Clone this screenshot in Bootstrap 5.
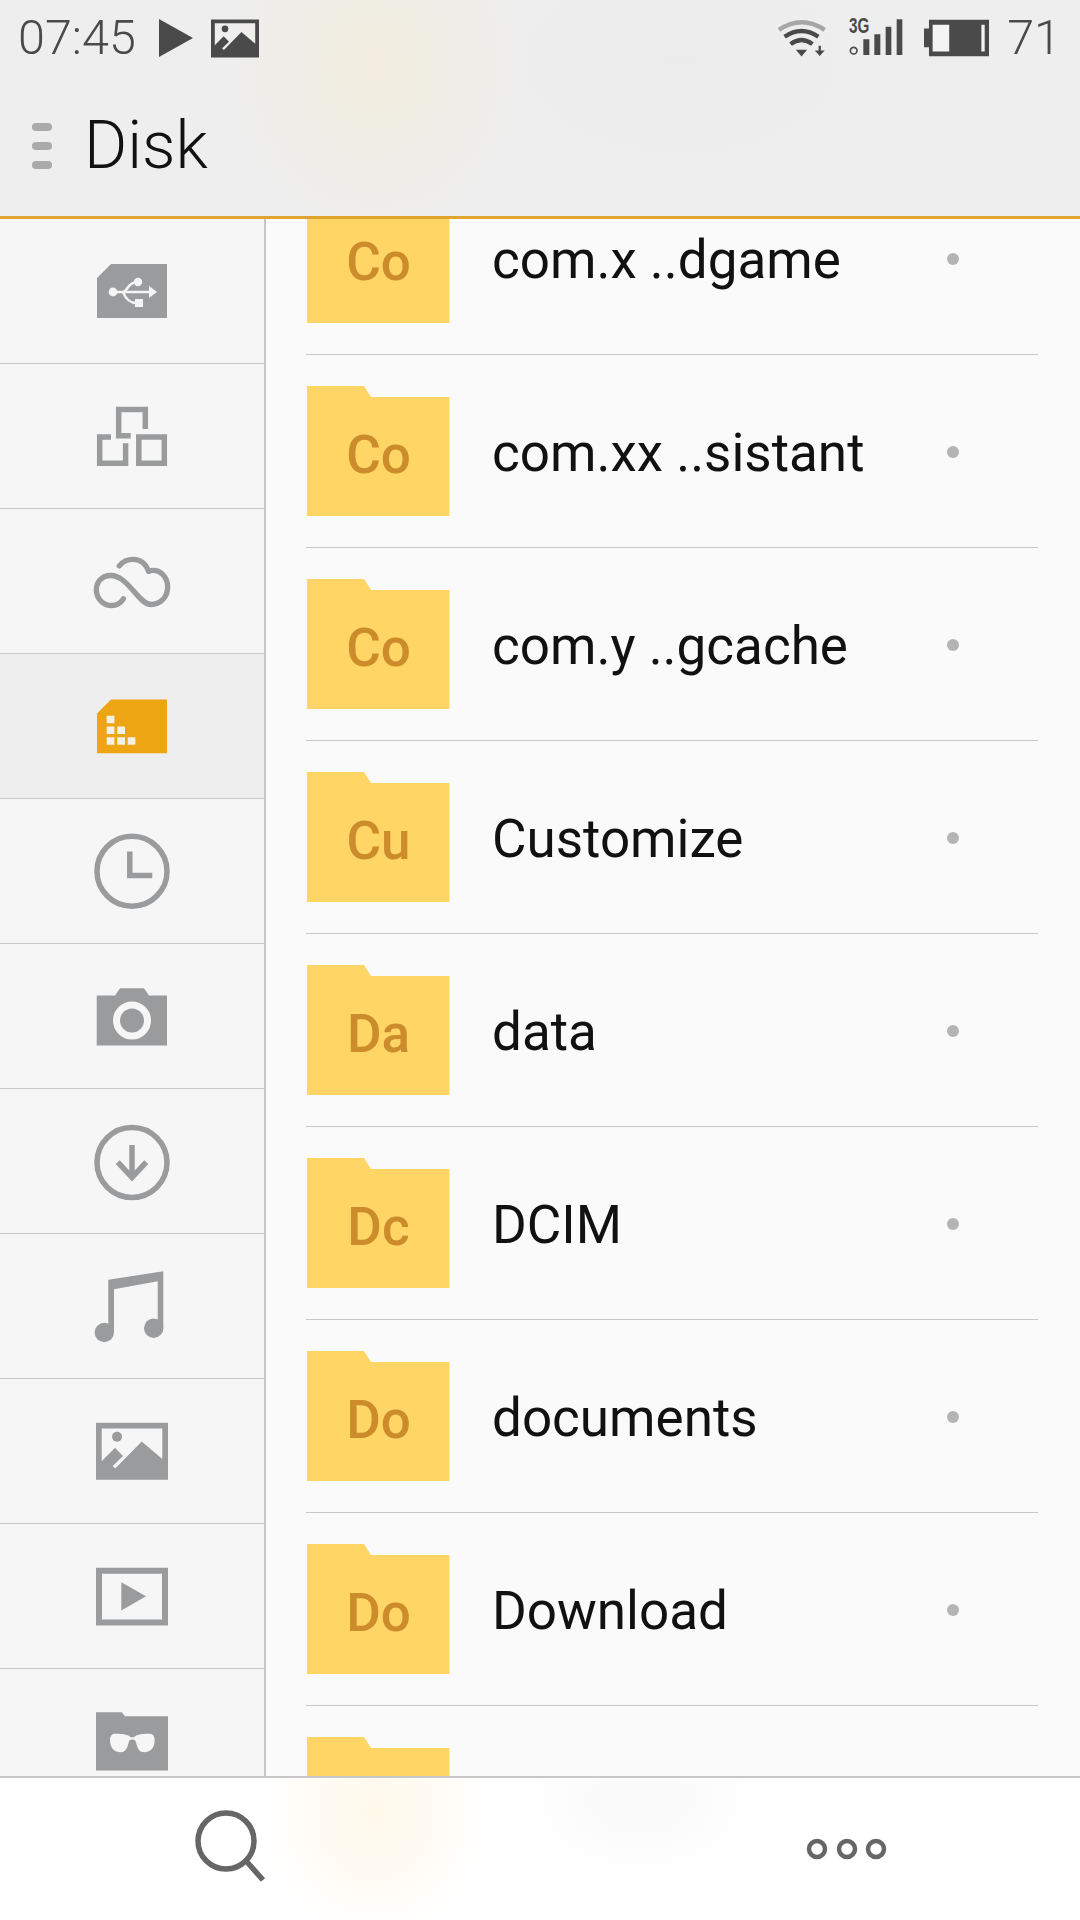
<!DOCTYPE html>
<html lang="en">
<head>
  <meta charset="UTF-8">
  <meta name="viewport" content="width=device-width, initial-scale=1">
  <title>Disk</title>
  <link href="https://cdn.jsdelivr.net/npm/bootstrap@5.3.0/dist/css/bootstrap.min.css" rel="stylesheet">
  <style>
    html, body { height: 1920px; overflow: hidden; }
    body { font-family: Roboto, "Liberation Sans", sans-serif; background: #fafafa; color: #111; }
    .app-shell { width: 1080px; height: 1920px; }
    .app-head {
      height: 219px; flex: none; border-bottom: 3px solid #e0a52e;
      background:
        radial-gradient(ellipse 150px 170px at 375px 65px, rgba(245,236,205,.5), rgba(245,236,205,0)),
        radial-gradient(ellipse 170px 100px at 680px 60px, rgba(232,232,232,.35), rgba(232,232,232,0)),
        #eeeeee;
    }
    .status-row { height: 76px; padding: 0 19px 0 18px; color: #4a4a4a; font-weight: 300; font-size: 48.5px; line-height: 76px; }
    .status-row svg { flex: none; display: block; }
    .ico-play { margin-left: 23px; }
    .ico-shot { margin-left: 18px; }
    .ico-signal { margin-left: 21px; margin-bottom: 9px; }
    .ico-battery { margin-left: 21px; }
    .batt-pct { margin-left: 18px; }
    .title-row { height: 140px; padding-left: 32px; }
    .menu-bars { width: 20px; gap: 11px; margin-right: 32px; }
    .menu-bars span { display: block; height: 8px; border-radius: 4px; background: #aaa; }
    .app-title { font-size: 66px; font-weight: 300; line-height: 1; color: #111; margin: 0; }
    .app-body { min-height: 0; }
    .side-col { width: 266px; flex: none; background: #f6f6f6; border-right: 2px solid #c6c6c6; overflow: hidden; }
    .side-item { height: 145px; flex: none; border-bottom: 1px solid #c8c8c8; color: #9a9b9c; }
    .side-item.is-on { background: #eeeeee; color: #eea514; }
    .file-col { padding: 0 42px 0 40px; overflow: hidden; background: #fafafa; }
    .file-rows { margin-top: -57px; }
    .file-row { height: 193px; flex: none; border-bottom: 1px solid #c8c8c8; position: relative; }
    .folder-box { width: 143px; height: 130px; margin: 0 42px 0 1px; position: relative; flex: none; }
    .folder-box svg { position: absolute; left: 0; top: 0; }
    .folder-tag { position: absolute; left: 0; right: 0; top: 15px; text-align: center; font-size: 53px; line-height: 108px; font-weight: 500; color: #cc8c2c; }
    .file-name { font-size: 53px; font-weight: 400; color: #111; line-height: 1; padding-top: 5px; white-space: nowrap; }
    .file-dot { position: absolute; left: 641px; top: 91px; width: 12px; height: 12px; border-radius: 50%; background: #b4b4b4; }
    .app-foot {
      height: 144px; flex: none; border-top: 2px solid #c8c8c8; padding: 0 191px 0 195px;
      background:
        radial-gradient(ellipse 115px 130px at 375px 35px, rgba(255,245,222,.65), rgba(255,245,222,0)),
        radial-gradient(ellipse 130px 90px at 640px 20px, rgba(243,243,243,.45), rgba(243,243,243,0)),
        #ffffff;
    }
  </style>
</head>
<body>
  <svg width="0" height="0" class="position-absolute">
    <symbol id="icoPicture" viewBox="0 0 80 80">
      <path fill="currentColor" fill-rule="evenodd" d="M4 11.8H76V68.8H4ZM9.7 17.5V50.2L23 36.8 31 45 20.7 55 23.3 57.5 49.7 30.5 70.3 48V17.5Z"/>
      <circle cx="25" cy="25.8" r="5" fill="currentColor"/>
    </symbol>
  </svg>

  <div class="app-shell d-flex flex-column">
    <!-- cabecera -->
    <header class="app-head d-flex flex-column">
      <div class="status-row d-flex align-items-center">
        <span>07:45</span>
        <svg class="ico-play" width="34" height="38" viewBox="0 0 34 38"><path fill="#4a4a4a" d="M0 0 34 19 0 38Z"/></svg>
        <svg class="ico-shot" width="48" height="39" viewBox="4 11 72 58.5"><use href="#icoPicture" width="80" height="80" color="#4a4a4a"/></svg>
        <div class="ms-auto d-flex align-items-center">
          <svg width="53" height="42" viewBox="225 50 160 125">
            <g fill="none" stroke-width="13">
              <path stroke="#a6a6a6" d="M237 88Q305 42 375 88"/>
              <path stroke="#4a4a4a" d="M254 109Q305 74 356 109"/>
              <path stroke="#4a4a4a" d="M272 131Q305 106 338 131"/>
            </g>
            <path fill="#4a4a4a" d="M288 148H322L305 168Z"/>
            <path stroke="#4a4a4a" stroke-width="7" d="M360 136V154"/>
            <path fill="#4a4a4a" d="M345 150H375L360 167Z"/>
          </svg>
          <svg class="ico-signal" width="54" height="47" viewBox="447 30 162 141">
            <text x="447" y="98" font-family="Liberation Sans, sans-serif" font-weight="700" font-size="68" fill="#4a4a4a" textLength="61" lengthAdjust="spacingAndGlyphs">3G</text>
            <circle cx="461" cy="152" r="10" fill="none" stroke="#4a4a4a" stroke-width="5"/>
            <path fill="#4a4a4a" d="M490 118H508V165H490ZM523 103H541V165H523ZM557 80H574V165H557ZM590 58H607V165H590Z"/>
          </svg>
          <svg class="ico-battery" width="65" height="38" viewBox="670 55 196 114">
            <path fill="#4a4a4a" d="M670 83H685V57H866V167H685V140H670Z"/>
            <path fill="#f4f4f4" d="M696 72H746V153H696ZM843 72H853V153H843Z"/>
          </svg>
          <span class="batt-pct">71</span>
        </div>
      </div>
      <div class="title-row d-flex align-items-center">
        <div class="menu-bars d-flex flex-column"><span></span><span></span><span></span></div>
        <h1 class="app-title">Disk</h1>
      </div>
    </header>

    <div class="app-body d-flex flex-grow-1">
      <!-- barra lateral -->
      <nav class="side-col d-flex flex-column">
        <div class="side-item d-flex align-items-center justify-content-center">
          <svg width="80" height="80" viewBox="0 0 80 80">
            <path fill="currentColor" d="M5 27 19 13H75V67H5Z"/>
            <g fill="#f4f4f4"><circle cx="21" cy="41" r="4.4"/><circle cx="46" cy="31" r="4.2"/><path d="M43 48H51V56H43ZM57 34.7 65 41 57 47Z"/></g>
            <g fill="none" stroke="#f4f4f4" stroke-width="2.6"><path d="M21 41H59"/><path d="M45 31C36 31 35 41 31 41"/><path d="M31 41C33 46 36 52 45 52"/></g>
          </svg>
        </div>
        <div class="side-item d-flex align-items-center justify-content-center">
          <svg width="80" height="80" viewBox="0 0 80 80"><g fill="none" stroke="currentColor" stroke-width="5.5">
            <path d="M53.3 33V13.5H26.7V39.7H38.7"/>
            <path d="M19 41H7.7V67.3H33.6V47.3"/>
            <path d="M46.8 41H72.3V67.3H46.8Z"/>
          </g></svg>
        </div>
        <div class="side-item d-flex align-items-center justify-content-center">
          <svg width="80" height="80" viewBox="0 0 80 80"><g transform="translate(-22 -10.5) scale(.3333)" fill="none" stroke="currentColor" stroke-width="16" stroke-linecap="round">
            <path d="M148 106C165 85 215 70 236 122"/>
            <path d="M236 122C270 112 293 140 293 170 293 200 270 222 243 222 205 222 175 135 122 135 95 135 79 155 79 178 79 205 100 225 125 225 140 225 152 218 160 205"/>
          </g></svg>
        </div>
        <div class="side-item is-on d-flex align-items-center justify-content-center">
          <svg width="80" height="80" viewBox="0 0 80 80">
            <path fill="currentColor" d="M5 27.5 19 13.5H75V67.2H5Z"/>
            <path fill="#f4f0e4" d="M14.7 29.8h7.7v7.5h-7.7ZM14.7 40.5h7.7v7.5h-7.7ZM25.3 40.5h7.7v7.5h-7.7ZM14.7 51.2h7.7v7.5h-7.7ZM25.3 51.2h7.7v7.5h-7.7ZM35.7 51.2h7.7v7.5h-7.7Z"/>
          </svg>
        </div>
        <div class="side-item d-flex align-items-center justify-content-center">
          <svg width="80" height="80" viewBox="0 0 80 80"><g fill="none" stroke="currentColor" stroke-width="5.5">
            <circle cx="40" cy="40.2" r="35"/>
            <path d="M37.8 20.5V44.5H60.3"/>
          </g></svg>
        </div>
        <div class="side-item d-flex align-items-center justify-content-center">
          <svg width="80" height="80" viewBox="0 0 80 80">
            <path fill="currentColor" d="M4.7 19.5H23L28 12.2H52L57 19.5H75V69.5H4.7Z"/>
            <circle cx="40" cy="44.5" r="15.5" fill="none" stroke="#f6f6f6" stroke-width="7"/>
          </svg>
        </div>
        <div class="side-item d-flex align-items-center justify-content-center">
          <svg width="80" height="80" viewBox="0 0 80 80"><g fill="none" stroke="currentColor" stroke-width="5.5">
            <circle cx="40" cy="41.5" r="35"/>
            <path d="M40 24V56"/>
            <path d="M25.7 41.2 40 56.5 54.3 41.2"/>
          </g></svg>
        </div>
        <div class="side-item d-flex align-items-center justify-content-center">
          <svg width="80" height="80" viewBox="0 0 80 80">
            <path fill="currentColor" d="M16.3 13.8 71.3 5.2V62H65.7V15.2L22 23.2V66H16.3Z"/>
            <circle cx="12.3" cy="66.5" r="9.7" fill="currentColor"/>
            <circle cx="61.7" cy="62.2" r="9.7" fill="currentColor"/>
          </svg>
        </div>
        <div class="side-item d-flex align-items-center justify-content-center">
          <svg width="80" height="80" viewBox="0 0 80 80"><use href="#icoPicture"/></svg>
        </div>
        <div class="side-item d-flex align-items-center justify-content-center">
          <svg width="80" height="80" viewBox="0 0 80 80">
            <path fill="currentColor" fill-rule="evenodd" d="M4 11.8H76V69.5H4ZM10 17.8V63.5H70V17.8Z"/>
            <path fill="currentColor" d="M29.3 26.2 54 40.2 29.3 54.5Z"/>
          </svg>
        </div>
        <div class="side-item d-flex align-items-center justify-content-center">
          <svg width="80" height="80" viewBox="0 0 80 80">
            <path fill="currentColor" d="M4 11.2H29.7L33 15.2H76V69.5H4Z"/>
            <path transform="translate(-22 -150.5) scale(.3333)" fill="#f6f6f6" d="M135 550C125 550 120 558 120 568 120 590 130 605 150 605 170 605 172 590 177 572 180 565 194 565 197 572 202 590 204 605 224 605 244 605 254 590 254 568 254 558 249 550 239 550 225 550 205 550 195 558 190 562 184 562 179 558 169 550 149 550 135 550Z"/>
          </svg>
        </div>
      </nav>

      <!-- lista de carpetas -->
      <main class="file-col flex-grow-1">
        <div class="file-rows d-flex flex-column" id="fileRows"></div>
      </main>
    </div>

    <footer class="app-foot d-flex align-items-center justify-content-between">
      <svg width="72" height="78" viewBox="0 0 72 78"><g fill="none" stroke="#666" stroke-width="5.5">
        <circle cx="31" cy="31" r="28"/>
        <path d="M52 52 68 70"/>
      </g></svg>
      <svg width="84" height="24" viewBox="0 0 84 24"><g fill="none" stroke="#666" stroke-width="4.5">
        <circle cx="12" cy="12" r="8"/><circle cx="42" cy="12" r="8"/><circle cx="71" cy="12" r="8"/>
      </g></svg>
    </footer>
  </div>

  <script src="https://cdn.jsdelivr.net/npm/bootstrap@5.3.0/dist/js/bootstrap.bundle.min.js"></script>
  <script>
    const folders = [
      ['Co', 'com.x ..dgame'],
      ['Co', 'com.xx ..sistant'],
      ['Co', 'com.y ..gcache'],
      ['Cu', 'Customize'],
      ['Da', 'data'],
      ['Dc', 'DCIM'],
      ['Do', 'documents'],
      ['Do', 'Download'],
      ['', '']
    ];
    const box = document.getElementById('fileRows');
    folders.forEach(f => {
      const row = document.createElement('div');
      row.className = 'file-row d-flex align-items-center';
      row.innerHTML = `<div class="folder-box">
          <svg width="143" height="130" viewBox="0 0 143 130"><path fill="#ffd565" d="M0 0H57L64 11H142.5V130H0Z"/></svg>
          <div class="folder-tag">${f[0]}</div>
        </div>
        <span class="file-name">${f[1]}</span>
        ${f[1] ? '<span class="file-dot"></span>' : ''}`;
      box.appendChild(row);
    });
  </script>
</body>
</html>
